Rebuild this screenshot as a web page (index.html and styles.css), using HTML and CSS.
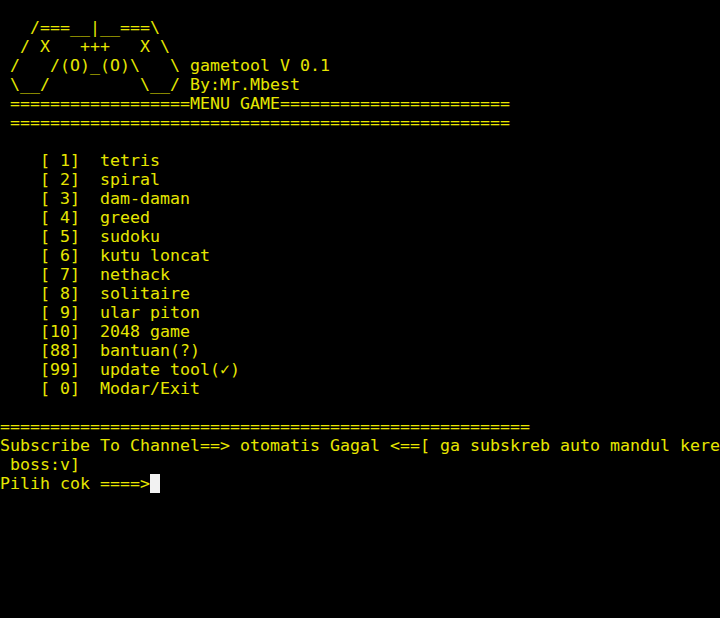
FILE: index.html
```html
<!DOCTYPE html>
<html>
<head>
<meta charset="utf-8">
<link rel="stylesheet" href="styles.css">
</head>
<body>
<pre class="term">   /===__|__===\
  / X   +++   X \
 /   /(O)_(O)\   \ gametool V 0.1
 \__/         \__/ By:Mr.Mbest
 ==================MENU GAME=======================
 ==================================================

    [ 1]  tetris
    [ 2]  spiral
    [ 3]  dam-daman
    [ 4]  greed
    [ 5]  sudoku
    [ 6]  kutu loncat
    [ 7]  nethack
    [ 8]  solitaire
    [ 9]  ular piton
    [10]  2048 game
    [88]  bantuan(?)
    [99]  update tool(✓)
    [ 0]  Modar/Exit

=====================================================
Subscribe To Channel==> otomatis Gagal &lt;==[ ga subskreb auto mandul kere
 boss:v]
Pilih cok ====&gt;<span class="cursor"> </span></pre>
</body>
</html>
```
FILE: styles.css
```css
html, body {
  margin: 0;
  padding: 0;
  background: #000;
}
body {
  width: 720px;
  height: 618px;
  overflow: hidden;
}
.term {
  margin: 0;
  padding: 18px 0 0 0;
  font-family: "DejaVu Sans Mono", monospace;
  font-size: 16.61px;
  line-height: 19px;
  color: #e6e600;
  white-space: pre;
}
.cursor {
  display: inline-block;
  width: 10px;
  height: 19px;
  vertical-align: top;
  background: #f2f2f2;
}
```
